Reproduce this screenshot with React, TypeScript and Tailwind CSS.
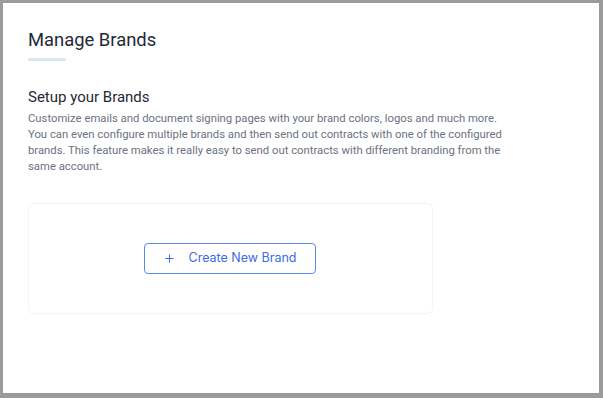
import { Plus } from "lucide-react";

export default function App() {
  return (
    <div className="w-[603px] h-[398px] bg-[#9b9b9b] pt-[3px] pl-[3px] pr-[4px] pb-[5px]">
      <div className="h-full bg-white pl-[25px] pt-[25px] font-['Roboto',sans-serif]">
        <h1 className="text-[18.4px] leading-[24px] text-[#1f2937]">Manage Brands</h1>
        <div className="mt-[6px] h-[3px] w-[38px] rounded-full bg-[#dde6ef]" />

        <h2 className="mt-[26px] text-[15px] leading-[20px] text-[#1f2937]">Setup your Brands</h2>
        <p className="mt-[4px] w-[476px] text-[11.3px] leading-[16px] text-[#6b7280]">
          Customize emails and document signing pages with your brand colors, logos and much more.
          You can even configure multiple brands and then send out contracts with one of the configured
          brands. This feature makes it really easy to send out contracts with different branding from the
          same account.
        </p>

        <div className="mt-[28px] flex h-[111px] w-[405px] items-center justify-center rounded-[6px] border border-dotted border-[#e3e7ec]">
          <button className="ml-[-2px] mb-[1px] flex h-[31px] w-[172px] items-center justify-center gap-[13px] rounded-[4px] border border-[#5a88f2] text-[12.5px] text-[#3a6be6] font-['Inter',sans-serif]">
            <Plus className="h-[13px] w-[13px]" strokeWidth={1.8} />
            <span>Create New Brand</span>
          </button>
        </div>
      </div>
    </div>
  );
}
